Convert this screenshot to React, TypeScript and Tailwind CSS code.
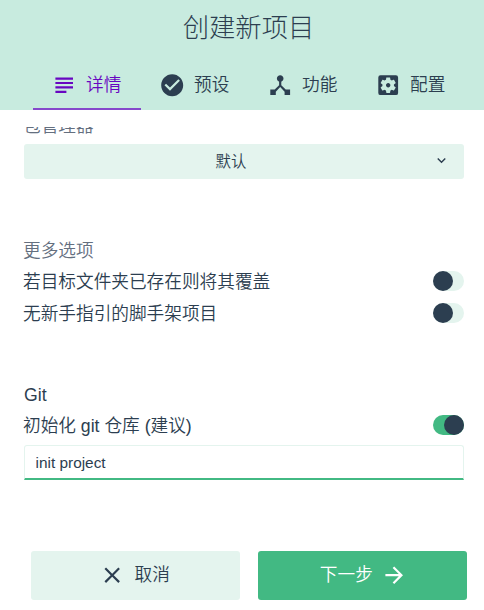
import React from 'react';
import {
  MdSubject,
  MdCheckCircle,
  MdDeviceHub,
  MdSettingsApplications,
  MdKeyboardArrowDown,
  MdClose,
  MdArrowForward,
} from 'react-icons/md';

const tabs = [
  { label: '详情', Icon: MdSubject, active: true },
  { label: '预设', Icon: MdCheckCircle, active: false },
  { label: '功能', Icon: MdDeviceHub, active: false },
  { label: '配置', Icon: MdSettingsApplications, active: false },
];

function Switch({ on }: { on: boolean }) {
  return (
    <span
      role="switch"
      aria-checked={on}
      className={`flex h-[19.5px] w-[31px] rounded-full ${on ? 'justify-end bg-[#42b983]' : 'justify-start bg-[#e4f4ee]'}`}
    >
      <span className="h-[19.5px] w-5 rounded-full bg-[#2c3e50]" />
    </span>
  );
}

function Option({ label, on }: { label: string; on: boolean }) {
  return (
    <div className="flex h-8 items-center justify-between">
      <span className="-ml-px pt-px">{label}</span>
      <Switch on={on} />
    </div>
  );
}

export default function App() {
  return (
    <div className="flex h-[610px] w-[484px] flex-col overflow-hidden bg-white font-['Liberation_Sans','Noto_Sans_CJK_SC',sans-serif] text-[17.67px] leading-6 font-[350] text-[#2c3e50]">
      <header className="flex h-[110px] shrink-0 flex-col justify-between bg-[#c8ebdf] pl-[14px]">
        <h1 className="pt-2 pr-px text-center text-[26.3px] leading-10 font-light">创建新项目</h1>
        <nav className="flex h-[50px] justify-center">
          {tabs.map(({ label, Icon, active }) => (
            <div
              key={label}
              className={`flex w-[108px] items-center justify-center gap-[9px] border-b-2 pt-[3px] pr-[2px] ${
                active ? 'border-[#8548cb] text-[#6806c1]' : 'border-transparent'
              }`}
            >
              <Icon className="size-[26.4px]" />
              <span className="pb-[2px]">{label}</span>
            </div>
          ))}
        </nav>
      </header>

      <main className="mt-[17px] flex h-[400px] shrink-0 flex-col overflow-hidden pr-5 pl-6">
        <div className="-mt-[13px] -ml-px h-[30px] shrink-0 text-[#646f7f]">包管理器</div>
        <div className="flex h-[35px] shrink-0 items-center rounded-[3px] bg-[#e4f4ee] pr-[14px] pl-[5px] text-[15.4px]">
          <span className="flex-1 text-center">默认</span>
          <MdKeyboardArrowDown className="-mt-0.5 size-[17px]" />
        </div>

        <section className="mt-[59px]">
          <h2 className="-ml-px h-[27px] leading-[26px] text-[#646f7f]">更多选项</h2>
          <Option label="若目标文件夹已存在则将其覆盖" on={false} />
          <Option label="无新手指引的脚手架项目" on={false} />
        </section>

        <section className="mt-[54px]">
          <h2 className="h-[26px]">Git</h2>
          <Option label="初始化 git 仓库 (建议)" on />
          <input
            defaultValue="init project"
            className="mt-1 block h-[35px] w-full rounded-t-[3px] border border-b-2 border-[#e4f4ee] border-b-[#42b983] bg-white px-[10.5px] pt-[2px] text-[15.4px] outline-none"
          />
        </section>
      </main>

      <footer className="mt-6 flex shrink-0 gap-[18px] pl-[31px]">
        <button className="flex h-[49px] w-[209px] items-center justify-center gap-[9px] rounded-[3px] bg-[#e4f4ee] pr-[2px]">
          <MdClose className="size-[26.4px]" />
          <span className="pb-[2px]">取消</span>
        </button>
        <button className="flex h-[49px] w-[209px] items-center justify-center gap-[8px] rounded-[3px] bg-[#42b983] pl-[2px] text-white">
          <span className="pb-[2px]">下一步</span>
          <MdArrowForward className="size-[26.4px]" />
        </button>
      </footer>
    </div>
  );
}
